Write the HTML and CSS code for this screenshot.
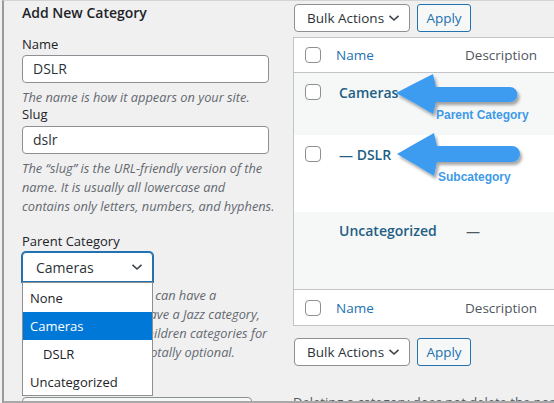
FILE: index.html
```html
<!DOCTYPE html>
<html>
<head>
<meta charset="utf-8">
<link rel="stylesheet" href="styles.css">
</head>
<body>
<div class="frame">
  <div class="col-left">
    <h2 class="heading">Add New Category</h2>
    <label class="label label-name">Name</label>
    <div class="input">DSLR</div>
    <p class="help help-name">The name is how it appears on your site.</p>
    <label class="label label-slug">Slug</label>
    <div class="input">dslr</div>
    <p class="help help-slug">The “slug” is the URL-friendly version of the<br>name. It is usually all lowercase and<br>contains only letters, numbers, and hyphens.</p>
    <label class="label label-parent">Parent Category</label>
    <div class="select-wrap">
      <div class="select">
        <span>Cameras</span>
        <svg class="chev" width="12" height="8" viewBox="0 0 12 8"><path d="M1.5 1.8 L6 6 L10.5 1.8" fill="none" stroke="#3c434a" stroke-width="1.6"/></svg>
      </div>
      <ul class="dropdown">
        <li>None</li>
        <li class="active">Cameras</li>
        <li class="sub">DSLR</li>
        <li>Uncategorized</li>
      </ul>
    </div>
    <p class="help help-parent">Categories, unlike tags, can have a<br>hierarchy. You might have a Jazz category,<br>and under that have children categories for<br>Bebop and Big Band. Totally optional.</p>
    <div class="submit"></div>
  </div>
  <div class="col-right">
    <div class="actions">
      <div class="bulk"><span>Bulk Actions</span><svg class="chev" width="12" height="8" viewBox="0 0 12 8"><path d="M1.5 1.8 L6 6 L10.5 1.8" fill="none" stroke="#3c434a" stroke-width="1.6"/></svg></div>
      <div class="apply">Apply</div>
    </div>
    <div class="table">
      <div class="row head">
        <div class="cb"><span class="box"></span></div>
        <div class="c-name">Name</div>
        <div class="c-desc">Description</div>
      </div>
      <div class="row r1 alt">
        <div class="cb"><span class="box"></span></div>
        <div class="c-name t">Cameras</div>
        <div class="c-desc"></div>
      </div>
      <div class="row r2">
        <div class="cb"><span class="box"></span></div>
        <div class="c-name t">— DSLR</div>
        <div class="c-desc"></div>
      </div>
      <div class="row r3 alt">
        <div class="cb"></div>
        <div class="c-name t">Uncategorized</div>
        <div class="c-desc dash">—</div>
      </div>
      <div class="row head foot">
        <div class="cb"><span class="box"></span></div>
        <div class="c-name">Name</div>
        <div class="c-desc">Description</div>
      </div>
    </div>
    <div class="actions actions-bottom">
      <div class="bulk"><span>Bulk Actions</span><svg class="chev" width="12" height="8" viewBox="0 0 12 8"><path d="M1.5 1.8 L6 6 L10.5 1.8" fill="none" stroke="#3c434a" stroke-width="1.6"/></svg></div>
      <div class="apply">Apply</div>
    </div>
    <p class="note">Deleting a category does not delete the posts in that category. Instead, posts</p>
  </div>
</div>
<svg class="overlay" width="554" height="403" viewBox="0 0 554 403">
  <defs>
    <filter id="sh" x="-20%" y="-30%" width="150%" height="180%">
      <feDropShadow dx="2" dy="3" stdDeviation="1.8" flood-color="#000" flood-opacity="0.35"/>
    </filter>
  </defs>
  <path filter="url(#sh)" fill="#3d9cf0" d="M396,93 Q415,83 433,74 L436,87 L510,87 A7.5,7.5 0 0 1 510,102 L436,102 L433,114 Q415,103 396,93 Z"/>
  <path filter="url(#sh)" fill="#3d9cf0" d="M397,154 Q416,143 434,133 L437,146 L512,146 A8,8 0 0 1 512,162 L437,162 L434,176 Q416,165 397,154 Z"/>
</svg>
<div class="tag tag-parent">Parent Category</div>
<div class="tag tag-sub">Subcategory</div>
</body>
</html>
```

FILE: styles.css
```css
* { box-sizing: border-box; }
html, body { margin: 0; padding: 0; }
body {
  position: relative;
  width: 554px;
  height: 403px;
  overflow: hidden;
  background: #f0f0f1;
  font-family: "Open Sans", "Noto Sans", sans-serif;
  color: #1d2327;
}
.frame {
  margin-left: 2px;
  height: 403px;
  border-left: 2px solid #9a9a9a;
  border-top: 1px solid #d4d4d4;
  border-bottom: 2px solid #a8a8a8;
  display: flex;
  overflow: hidden;
}
.col-left {
  width: 289px;
  padding-left: 18px;
  flex: none;
}
.heading {
  margin: 3px 0 0;
  font-size: 14px;
  line-height: 18px;
  font-weight: 600;
  color: #1d2327;
}
.label {
  display: block;
  font-size: 13px;
  line-height: 18px;
  color: #1d2327;
}
.label-name { margin-top: 13px; }
.label-slug { line-height: 17px; }
.label-parent { margin-top: 16px; }
.input {
  width: 247px;
  height: 28px;
  margin-top: 2px;
  border: 1px solid #8c8f94;
  border-radius: 4px;
  background: #fff;
  padding: 0 10px;
  font-size: 14px;
  line-height: 26px;
  color: #2c3338;
}
.label-slug + .input { margin-top: 3px; }
.help {
  margin: 0;
  font-size: 12.8px;
  font-style: italic;
  color: #646970;
  white-space: nowrap;
}
.help-name { margin-top: 5px; line-height: 18px; }
.help-slug { margin-top: 5px; line-height: 19px; }
.help-parent { margin-top: 4px; line-height: 19px; }
.select-wrap {
  position: relative;
  margin-top: 2px;
  width: 131px;
}
.select {
  height: 30px;
  border: 1px solid #2271b1;
  box-shadow: 0 0 0 1px #2271b1;
  border-radius: 4px 4px 0 0;
  background: #fff;
  display: flex;
  align-items: center;
  justify-content: space-between;
  padding: 0 9px 0 13px;
  font-size: 14px;
  color: #2c3338;
}
.dropdown {
  position: absolute;
  top: 30px;
  left: 0;
  width: 131px;
  height: 114px;
  margin: 0;
  padding: 1px 0 0;
  list-style: none;
  background: #fff;
  border: 1px solid #8f8f8f;
  z-index: 2;
}
.dropdown li {
  height: 28px;
  line-height: 28px;
  padding-left: 7px;
  font-size: 13px;
  color: #1d2327;
}
.dropdown li.active {
  background: #0078d7;
  color: #fff;
}
.dropdown li.sub { padding-left: 20px; }
.submit {
  margin-top: 35px;
  width: 230px;
  height: 30px;
  border: 1px solid #8c8f94;
  border-radius: 4px;
  background: #f6f7f7;
}
.col-right {
  flex: 1;
  min-width: 0;
}
.actions {
  display: flex;
  align-items: center;
  gap: 7px;
  margin-top: 3px;
  padding-left: 1px;
}
.bulk {
  width: 116px;
  height: 28px;
  border: 1px solid #8c8f94;
  border-radius: 4px;
  background: #fff;
  display: flex;
  align-items: center;
  justify-content: space-between;
  padding: 0 9px 0 12px;
  font-size: 13.5px;
  color: #2c3338;
}
.apply {
  width: 54px;
  height: 28px;
  border: 1px solid #2271b1;
  border-radius: 3px;
  background: #f6f7f7;
  color: #2271b1;
  font-size: 13.5px;
  line-height: 26px;
  text-align: center;
}
.table {
  margin-top: 5px;
  width: 300px;
  background: #fff;
  border: 1px solid #c3c4c7;
  border-right: none;
}
.row {
  display: flex;
}
.row.alt { background: #f6f7f7; }
.cb {
  width: 42px;
  flex: none;
  padding-left: 11px;
}
.box {
  display: block;
  width: 16px;
  height: 16px;
  border: 1px solid #8c8f94;
  border-radius: 4px;
  background: #fff;
}
.c-name { width: 129px; flex: none; }
.c-desc { flex: 1; }
.head {
  height: 35px;
  align-items: center;
  border-bottom: 1px solid #c3c4c7;
  font-size: 13.5px;
  color: #2271b1;
}
.head .c-desc { color: #50575e; }
.foot {
  border-bottom: none;
  border-top: 1px solid #c3c4c7;
  height: 36px;
}
.r1 { height: 62px; padding-top: 11px; }
.r2 { height: 77px; padding-top: 11px; }
.r3 { height: 77px; padding-top: 10px; }
.row .t {
  padding-left: 3px;
  font-size: 14px;
  font-weight: 600;
  line-height: 18px;
  color: #1f5f85;
}
.dash {
  font-size: 14px;
  line-height: 20px;
  color: #50575e;
  padding-left: 1px;
}
.actions-bottom { margin-top: 12px; }
.note {
  margin: 27px 0 0;
  white-space: nowrap;
  font-size: 13px;
  line-height: 18px;
  color: #50575e;
}
.overlay {
  position: absolute;
  left: 0;
  top: 0;
  pointer-events: none;
}
.tag {
  position: absolute;
  font-family: "Liberation Sans", Arial, sans-serif;
  font-weight: 700;
  font-size: 12px;
  line-height: 14px;
  color: #3d9ae8;
  white-space: nowrap;
}
.tag-parent { left: 436px; top: 108px; }
.tag-sub { left: 438px; top: 170px; }
```
